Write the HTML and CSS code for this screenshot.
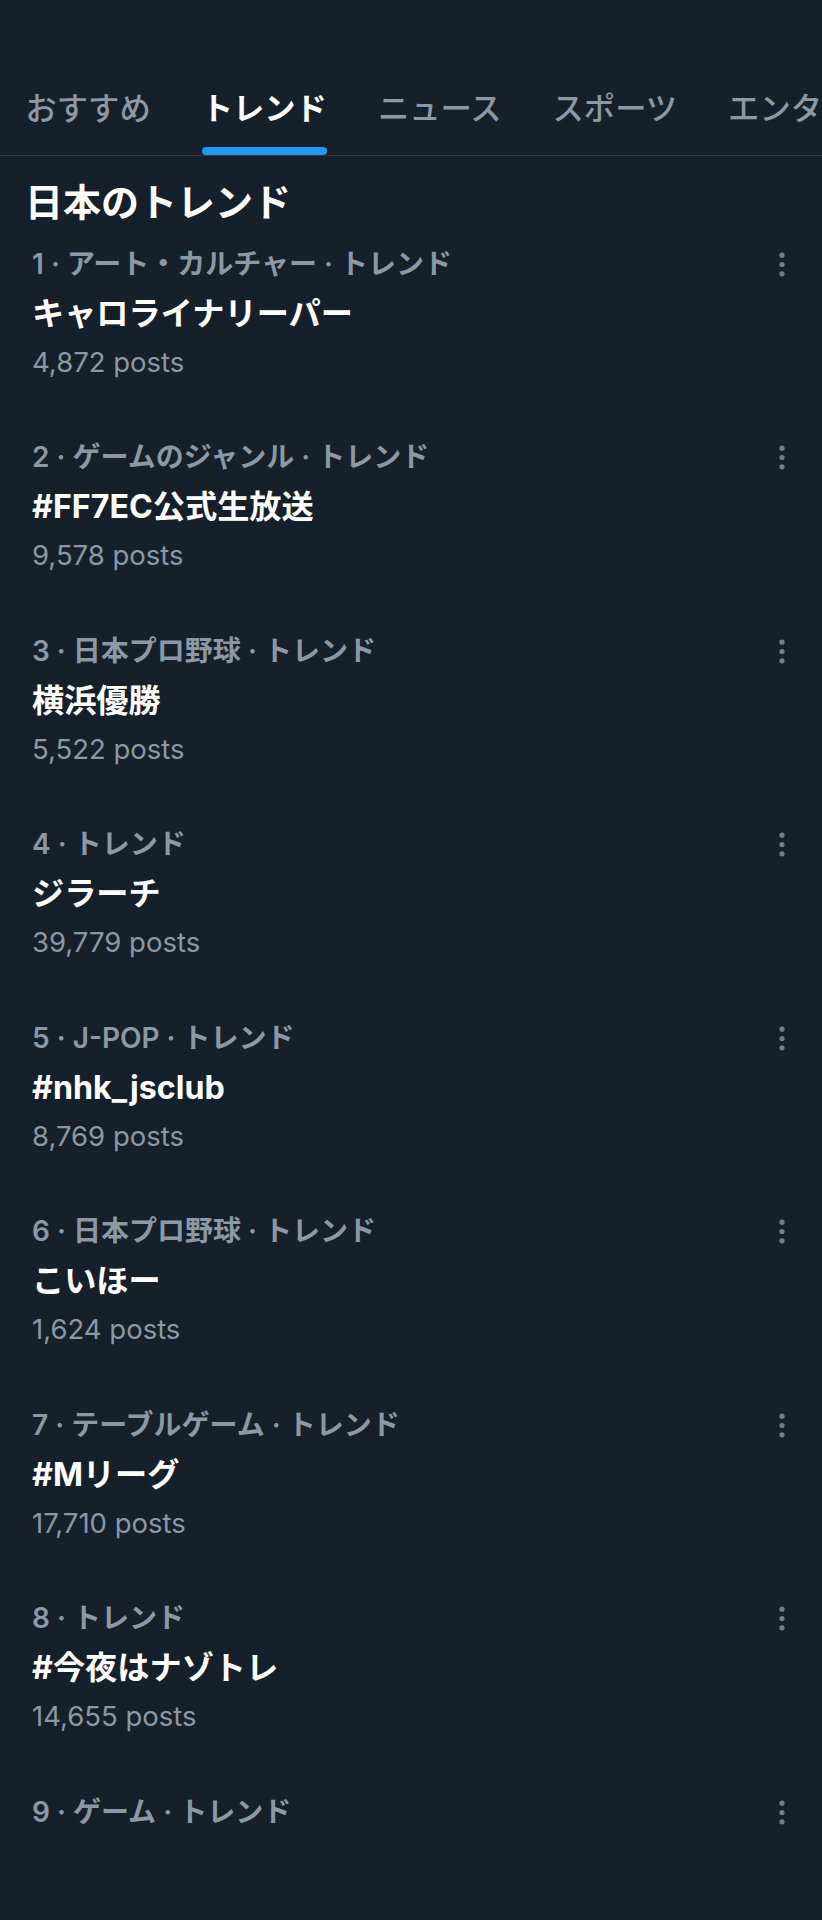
FILE: index.html
```html
<!DOCTYPE html>
<html lang="ja">
<head>
	<meta charset="UTF-8">
	<title>トレンド</title>
	<link rel="stylesheet" href="styles.css">
</head>
<body>
	<nav class="tabs">
		<a class="tab"><span class="tab-label">おすすめ</span></a>
		<a class="tab active"><span class="tab-label">トレンド<i class="bar"></i></span></a>
		<a class="tab"><span class="tab-label">ニュース</span></a>
		<a class="tab"><span class="tab-label">スポーツ</span></a>
		<a class="tab"><span class="tab-label">エンタメ</span></a>
	</nav>

	<h2 class="heading">日本のトレンド</h2>

	<div class="trends">
		<div class="trend">
			<div class="info">
				<div class="meta">1 · アート・カルチャー · トレンド</div>
				<div class="name">キャロライナリーパー</div>
				<div class="count">4,872 posts</div>
			</div>
			<button class="more"><svg viewBox="0 0 24 49"><circle cx="12" cy="15.2" r="2.6"/><circle cx="12" cy="24.5" r="2.6"/><circle cx="12" cy="33.8" r="2.6"/></svg></button>
		</div>
		<div class="trend">
			<div class="info">
				<div class="meta">2 · ゲームのジャンル · トレンド</div>
				<div class="name">#FF7EC公式生放送</div>
				<div class="count">9,578 posts</div>
			</div>
			<button class="more"><svg viewBox="0 0 24 49"><circle cx="12" cy="15.2" r="2.6"/><circle cx="12" cy="24.5" r="2.6"/><circle cx="12" cy="33.8" r="2.6"/></svg></button>
		</div>
		<div class="trend">
			<div class="info">
				<div class="meta">3 · 日本プロ野球 · トレンド</div>
				<div class="name">横浜優勝</div>
				<div class="count">5,522 posts</div>
			</div>
			<button class="more"><svg viewBox="0 0 24 49"><circle cx="12" cy="15.2" r="2.6"/><circle cx="12" cy="24.5" r="2.6"/><circle cx="12" cy="33.8" r="2.6"/></svg></button>
		</div>
		<div class="trend">
			<div class="info">
				<div class="meta">4 · トレンド</div>
				<div class="name">ジラーチ</div>
				<div class="count">39,779 posts</div>
			</div>
			<button class="more"><svg viewBox="0 0 24 49"><circle cx="12" cy="15.2" r="2.6"/><circle cx="12" cy="24.5" r="2.6"/><circle cx="12" cy="33.8" r="2.6"/></svg></button>
		</div>
		<div class="trend">
			<div class="info">
				<div class="meta">5 · J-POP · トレンド</div>
				<div class="name">#nhk_jsclub</div>
				<div class="count">8,769 posts</div>
			</div>
			<button class="more"><svg viewBox="0 0 24 49"><circle cx="12" cy="15.2" r="2.6"/><circle cx="12" cy="24.5" r="2.6"/><circle cx="12" cy="33.8" r="2.6"/></svg></button>
		</div>
		<div class="trend">
			<div class="info">
				<div class="meta">6 · 日本プロ野球 · トレンド</div>
				<div class="name">こいほー</div>
				<div class="count">1,624 posts</div>
			</div>
			<button class="more"><svg viewBox="0 0 24 49"><circle cx="12" cy="15.2" r="2.6"/><circle cx="12" cy="24.5" r="2.6"/><circle cx="12" cy="33.8" r="2.6"/></svg></button>
		</div>
		<div class="trend">
			<div class="info">
				<div class="meta">7 · テーブルゲーム · トレンド</div>
				<div class="name">#Mリーグ</div>
				<div class="count">17,710 posts</div>
			</div>
			<button class="more"><svg viewBox="0 0 24 49"><circle cx="12" cy="15.2" r="2.6"/><circle cx="12" cy="24.5" r="2.6"/><circle cx="12" cy="33.8" r="2.6"/></svg></button>
		</div>
		<div class="trend">
			<div class="info">
				<div class="meta">8 · トレンド</div>
				<div class="name">#今夜はナゾトレ</div>
				<div class="count">14,655 posts</div>
			</div>
			<button class="more"><svg viewBox="0 0 24 49"><circle cx="12" cy="15.2" r="2.6"/><circle cx="12" cy="24.5" r="2.6"/><circle cx="12" cy="33.8" r="2.6"/></svg></button>
		</div>
		<div class="trend">
			<div class="info">
				<div class="meta">9 · ゲーム · トレンド</div>
			</div>
			<button class="more"><svg viewBox="0 0 24 49"><circle cx="12" cy="15.2" r="2.6"/><circle cx="12" cy="24.5" r="2.6"/><circle cx="12" cy="33.8" r="2.6"/></svg></button>
		</div>
	</div>
</body>
</html>
```

FILE: styles.css
```css
* {
    box-sizing: border-box;
    margin: 0;
    padding: 0;
}

body {
    background-color: #16202a;
    color: #ffffff;
    font-family: "Inter", "Noto Sans CJK JP", sans-serif;
    overflow: hidden;
    height: 1920px;
}

/* tabs on top */
.tabs {
    display: flex;
    white-space: nowrap;
    overflow: hidden;
    padding-top: 89px;
    border-bottom: 1px solid #2f3a45;
}

.tab {
    flex: none;
    padding: 0 25.5px;
    font-size: 31.3px;
    line-height: 40px;
    font-weight: 500;
    color: #8b98a5;
}

.tab-label {
    display: flex;
    flex-direction: column;
}

.tab-label::after {
    content: "";
    height: 26px;
}

.tab.active {
    color: #ffffff;
    font-weight: 700;
}

.tab.active .tab-label::after {
    display: none;
}

.bar {
    display: block;
    height: 8px;
    margin-top: 18px;
    border-radius: 4px;
    background-color: #1d9bf0;
}

.heading {
    font-size: 38px;
    line-height: 32px;
    font-weight: 700;
    margin-top: 29.5px;
    padding-left: 25px;
}

/* trend rows */
.trend {
    display: flex;
    align-items: flex-start;
    padding: 22px 28px 24.5px 32px;
    height: 193.5px;
}

.info {
    flex: 1;
}

.meta {
    font-size: 28px;
    line-height: 49px;
    font-weight: 600;
    color: #8b98a5;
}

.name {
    font-size: 32.2px;
    line-height: 49px;
    font-weight: 700;
    color: #ffffff;
}

.count {
    font-size: 27.5px;
    line-height: 49px;
    color: #8b98a5;
}

.more {
    background: none;
    border: none;
    width: 24px;
    height: 49px;
}

.more svg {
    display: block;
    width: 24px;
    height: 49px;
    fill: #717f8c;
}
```
